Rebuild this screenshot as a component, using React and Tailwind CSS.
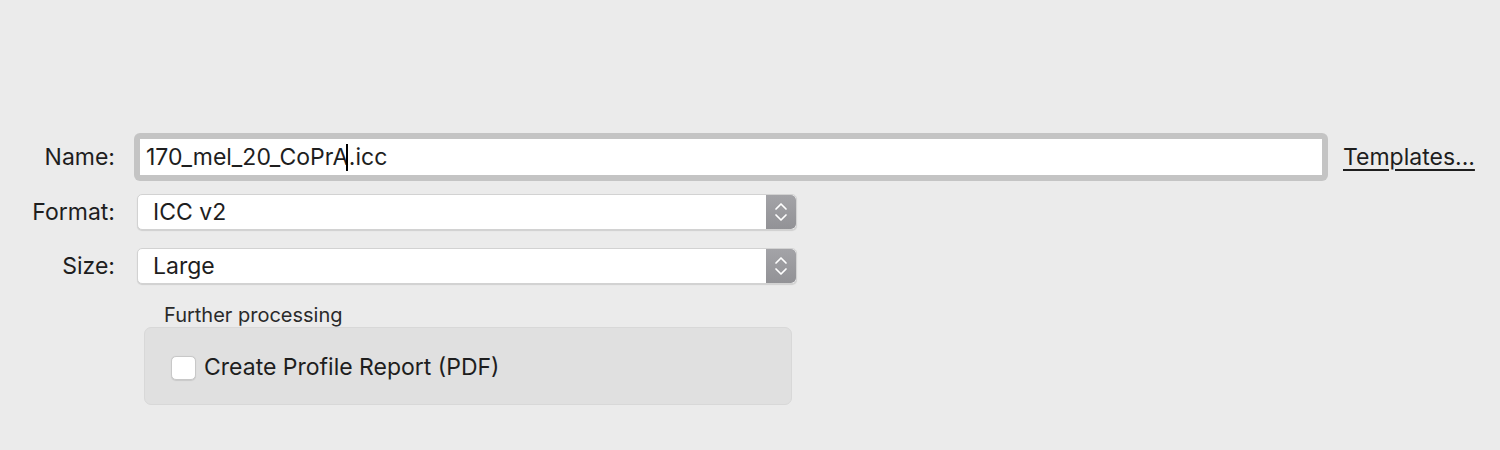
import React from "react";

function Stepper() {
  return (
    <div className="w-[30px] h-full rounded-r-[5px] bg-gradient-to-b from-[#a3a3a7] to-[#929296] flex items-center justify-center">
      <svg width="14" height="24" viewBox="0 0 14 24" fill="none" stroke="white" strokeWidth="1.7" strokeLinecap="round" strokeLinejoin="round">
        <path d="M2 9 L7 4 L12 9" />
        <path d="M2 15 L7 20 L12 15" />
      </svg>
    </div>
  );
}

function Select({ value }) {
  return (
    <div className="ml-[22px] w-[660px] h-[36px] flex rounded-[5px] bg-white border border-[#d2d2d2] shadow-[0_1px_1px_rgba(0,0,0,0.12)] overflow-hidden">
      <div className="flex-1 flex items-center pl-[15px] text-[23px] text-[#1e1e1e]">{value}</div>
      <Stepper />
    </div>
  );
}

export default function App() {
  return (
    <div
      className="w-[1500px] h-[450px] bg-[#ebebeb] pt-[133px] text-[#1e1e1e]"
      style={{ fontFamily: "Inter, 'Noto Sans', sans-serif" }}
    >
      {/* Name */}
      <div className="flex items-center h-[48px]">
        <div className="w-[115px] text-right text-[23px]">Name:</div>
        <div className="ml-[19px] w-[1194px] h-[48px] rounded-[6px] bg-[#c4c4c4] p-[6px]">
          <div className="w-full h-full bg-white flex items-center pl-[6px] text-[23px]">
            <span>170_mel_20_CoPrA</span>
            <span className="inline-block w-[1.5px] h-[27px] bg-black -ml-[2px] mr-[1px]"></span>
            <span>.icc</span>
          </div>
        </div>
        <div className="ml-[15px] text-[23px] underline decoration-[1.5px] underline-offset-[4px]">Templates...</div>
      </div>

      {/* Format */}
      <div className="flex items-center mt-[13px]">
        <div className="w-[115px] text-right text-[23px]">Format:</div>
        <Select value="ICC v2" />
      </div>

      {/* Size */}
      <div className="flex items-center mt-[18px]">
        <div className="w-[115px] text-right text-[23px]">Size:</div>
        <Select value="Large" />
      </div>

      {/* Further processing */}
      <div className="ml-[164px] mt-[19px] text-[20px] leading-[24px] text-[#2a2a2a]">Further processing</div>
      <div className="ml-[144px] w-[648px] h-[78px] rounded-[7px] bg-[#e0e0e0] border border-[#d8d8d8] flex items-center pl-[26px] pt-[3px]">
        <div className="w-[25px] h-[24px] rounded-[5px] bg-white border border-[#c8c8c8] shadow-[0_0.5px_1px_rgba(0,0,0,0.1)]"></div>
        <div className="ml-[8px] text-[23px]">Create Profile Report (PDF)</div>
      </div>
    </div>
  );
}
